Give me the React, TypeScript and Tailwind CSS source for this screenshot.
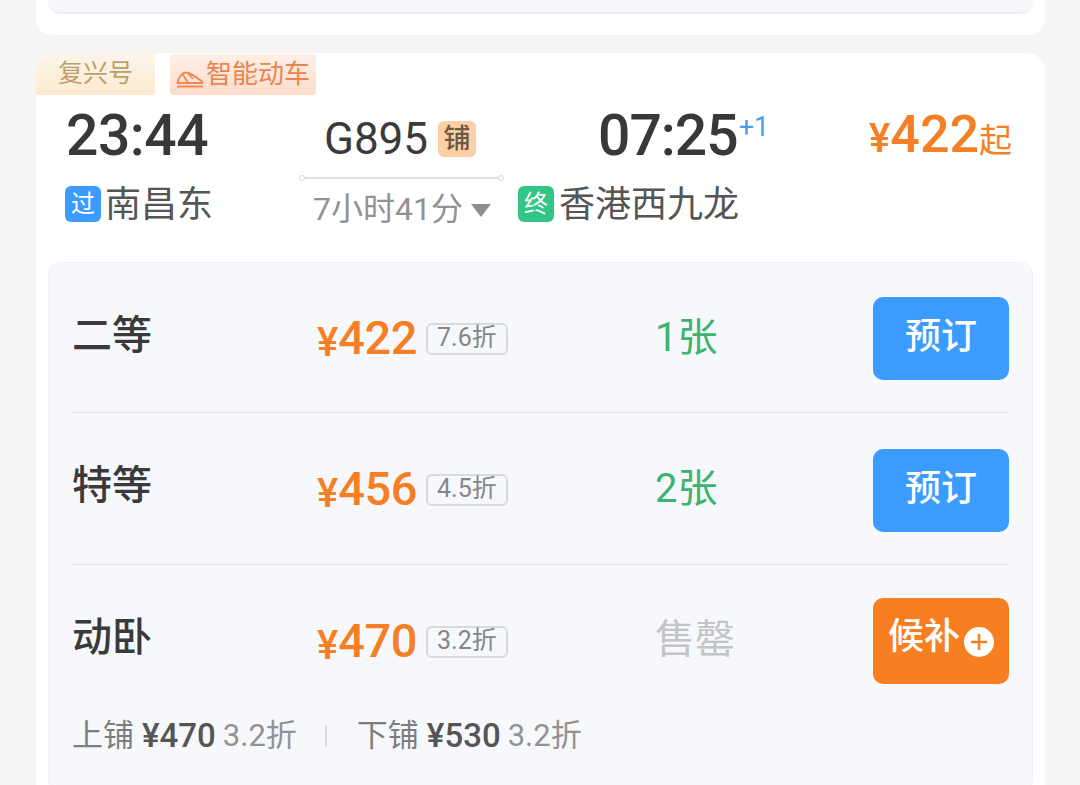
import React from "react";

const SEATS = [
  { name: "二等", price: "422", discount: "7.6折", stock: "1张", action: "预订", rowClass: "pt-[34px] pb-[32px]", btnClass: "h-[83px]", priceClass: "mt-[6px]", nameClass: "pt-[11px]", stockClass: "pt-[11px]" },
  { name: "特等", price: "456", discount: "4.5折", stock: "2张", action: "预订", rowClass: "pt-[36px] pb-[32px]", btnClass: "h-[83px]", priceClass: "mt-[5px]", nameClass: "pt-[9px]", stockClass: "pt-[10px]" },
  { name: "动卧", price: "470", discount: "3.2折", stock: "售罄", action: "候补", rowClass: "pt-[33px] pb-[30px]", btnClass: "h-[86px]", priceClass: "mt-[8px]", nameClass: "pt-[12px]", stockClass: "pt-[12px]" },
];

function TrainIcon() {
  return (
    <svg width="28" height="17" viewBox="0 0 28 17" fill="none" stroke="#ee8a55" strokeWidth="1.8" className="mr-[2px] mt-[9px]">
      <path d="M1.500 12C2.500 6 6 1.500 10.500 1.500C14 1.500 20 6 26 10.500C27 11.500 26.500 12 25.500 12Z" />
      <path d="M7 3.500L12 12M11.500 2L17 8" />
      <path d="M1 15.500H27" strokeWidth="2" />
    </svg>
  );
}

function SeatRow({ seat, last }: { seat: (typeof SEATS)[number]; last: boolean }) {
  const soldOut = seat.stock === "售罄";
  return (
    <div className={`flex items-start ${seat.rowClass} ${last ? "" : "border-b border-[#e3e4e8]"}`}>
      <div className={`w-[245px] text-[40px] leading-[56px] font-medium text-[#3a3a3a] ${seat.nameClass}`}>{seat.name}</div>
      <div className={`w-[338px] flex items-center ${seat.priceClass}`}>
        <span className="mt-[10px] text-[40px] leading-[54px] font-medium text-[#f47f24]">¥</span>
        <span className="text-[47px] leading-[70px] font-medium text-[#f47f24] tracking-[-0.5px]">{seat.price}</span>
        <span className="ml-[9px] mt-[2px] flex h-[32px] w-[82px] items-start justify-center rounded-[6px] border-2 border-[#d9dade] text-[25px] leading-[25px] text-[#85868a]">
          {seat.discount}
        </span>
      </div>
      <div className={`w-[218px] text-[40px] leading-[60px] ${seat.stockClass} ${soldOut ? "text-[#c3c4c7]" : "text-[#3cb46e]"}`}>{seat.stock}</div>
      <div className={`flex w-[136px] items-center justify-center rounded-[10px] text-[36px] font-medium text-white ${seat.btnClass} ${soldOut ? "bg-[#f77e21] pb-[8px]" : "bg-[#3b9bff] pb-[4px]"}`}>
        {seat.action}
        {soldOut && (
          <svg width="30" height="30" viewBox="0 0 30 30" className="mt-[10px] ml-[4px]">
            <circle cx="15" cy="15" r="15" fill="#fff" />
            <path d="M15 7V23M7 15H23" stroke="#f77e21" strokeWidth="2.500" />
          </svg>
        )}
      </div>
    </div>
  );
}

export default function App() {
  return (
    <div className="h-[785px] w-[1080px] overflow-hidden bg-[#f5f5f5] pl-[36px] pr-[35px] font-[Roboto,'Noto_Sans_CJK_SC',sans-serif]">
      <div className="h-[35px] rounded-b-[16px] bg-white px-[12px]">
        <div className="h-[14px] rounded-b-[12px] border-b-2 border-[#eef0f4] bg-[#f7f8fc]" />
      </div>

      <div className="mt-[18px] h-[732px] rounded-t-[18px] bg-white">
        <div className="flex h-[42px] items-start">
          <div className="flex h-[42px] w-[119px] items-center justify-center rounded-tl-[18px] rounded-br-[4px] bg-linear-to-b from-[#fbf5ea] to-[#fdeacf] text-[25px] text-[#bb9f6e]">
            复兴号
          </div>
          <div className="ml-[15px] mt-[1px] flex h-[41px] w-[146px] items-center justify-center rounded-[3px] bg-linear-to-b from-[#fdf0e8] to-[#fddccb] text-[26px] text-[#e8854f]">
            <TrainIcon />
            智能动车
          </div>
        </div>

        <div className="flex h-[167px] items-start">
          <div className="ml-[29px] w-[235px]">
            <div className="ml-[1px] mt-[8px] text-[57px] leading-[66px] font-medium text-[#383838] tracking-[-0.5px]">23:44</div>
            <div className="mt-[11px] flex items-center">
              <span className="flex h-[36px] w-[36px] items-center justify-center rounded-[6px] bg-[#3b9bff] text-[24px] text-white">过</span>
              <span className="ml-[4px] mt-[3px] text-[36px] leading-[44px] text-[#555]">南昌东</span>
            </div>
          </div>

          <div className="w-[203px]">
            <div className="mt-[16px] flex items-center justify-center pr-[3px]">
              <span className="text-[44px] leading-[56px] text-[#3a3a3a]">G895</span>
              <span className="ml-[10px] flex h-[36px] w-[38px] items-center justify-center rounded-[6px] bg-[#fdcfa6] text-[27px] font-medium text-[#6c5a48]">铺</span>
            </div>
            <div className="relative mt-[10px] h-[2px] bg-[#dfe0e2]">
              <span className="absolute -left-[1px] -top-[2px] h-[6px] w-[6px] rounded-full border border-[#d6d7d9] bg-white" />
              <span className="absolute -right-[1px] -top-[2px] h-[6px] w-[6px] rounded-full border border-[#d6d7d9] bg-white" />
            </div>
            <div className="ml-[13px] mt-[8px] flex items-center text-[32px] leading-[44px] text-[#929292]">
              7小时41分
              <span className="ml-[8px] mt-[3px] h-0 w-0 border-x-[10px] border-t-[13px] border-x-transparent border-t-[#8f8f8f]" />
            </div>
          </div>

          <div className="ml-[15px] w-[300px]">
            <div className="ml-[80px] mt-[8px] flex items-start">
              <span className="text-[57px] leading-[66px] font-medium text-[#383838] tracking-[-1px]">07:25</span>
              <span className="ml-[1px] mt-[9px] text-[27px] leading-[30px] text-[#4a9fe8]">+1</span>
            </div>
            <div className="mt-[11px] flex items-center">
              <span className="flex h-[36px] w-[36px] items-center justify-center rounded-[6px] bg-[#33c585] text-[24px] text-white">终</span>
              <span className="ml-[5px] mt-[3px] text-[36px] leading-[44px] text-[#555]">香港西九龙</span>
            </div>
          </div>

          <div className="mt-[10px] flex w-[194px] items-baseline justify-end text-[#f47f24]">
            <span className="text-[40px] font-medium leading-[60px]">¥</span>
            <span className="text-[52px] font-medium leading-[60px]">422</span>
            <span className="text-[33px] leading-[60px]">起</span>
          </div>
        </div>

        <div className="mx-[12px] h-[530px] rounded-[12px] border border-[#f0f1f5] bg-[#f7f8fc] px-[23px]">
          {SEATS.map((seat, index) => (
            <SeatRow key={seat.name} seat={seat} last={index === SEATS.length - 1} />
          ))}
          <div className="flex items-center text-[31px] leading-[44px] text-[#929292]">
            <span className="text-[#7d7d7d]">上铺</span>
            <span className="ml-[8px] text-[33px] font-medium text-[#555]">¥470</span>
            <span className="ml-[7px]">3.2折</span>
            <span className="ml-[28px] h-[22px] w-[2px] bg-[#dcdde0]" />
            <span className="ml-[30px] text-[#7d7d7d]">下铺</span>
            <span className="ml-[8px] text-[33px] font-medium text-[#555]">¥530</span>
            <span className="ml-[7px]">3.2折</span>
          </div>
        </div>
      </div>
    </div>
  );
}
